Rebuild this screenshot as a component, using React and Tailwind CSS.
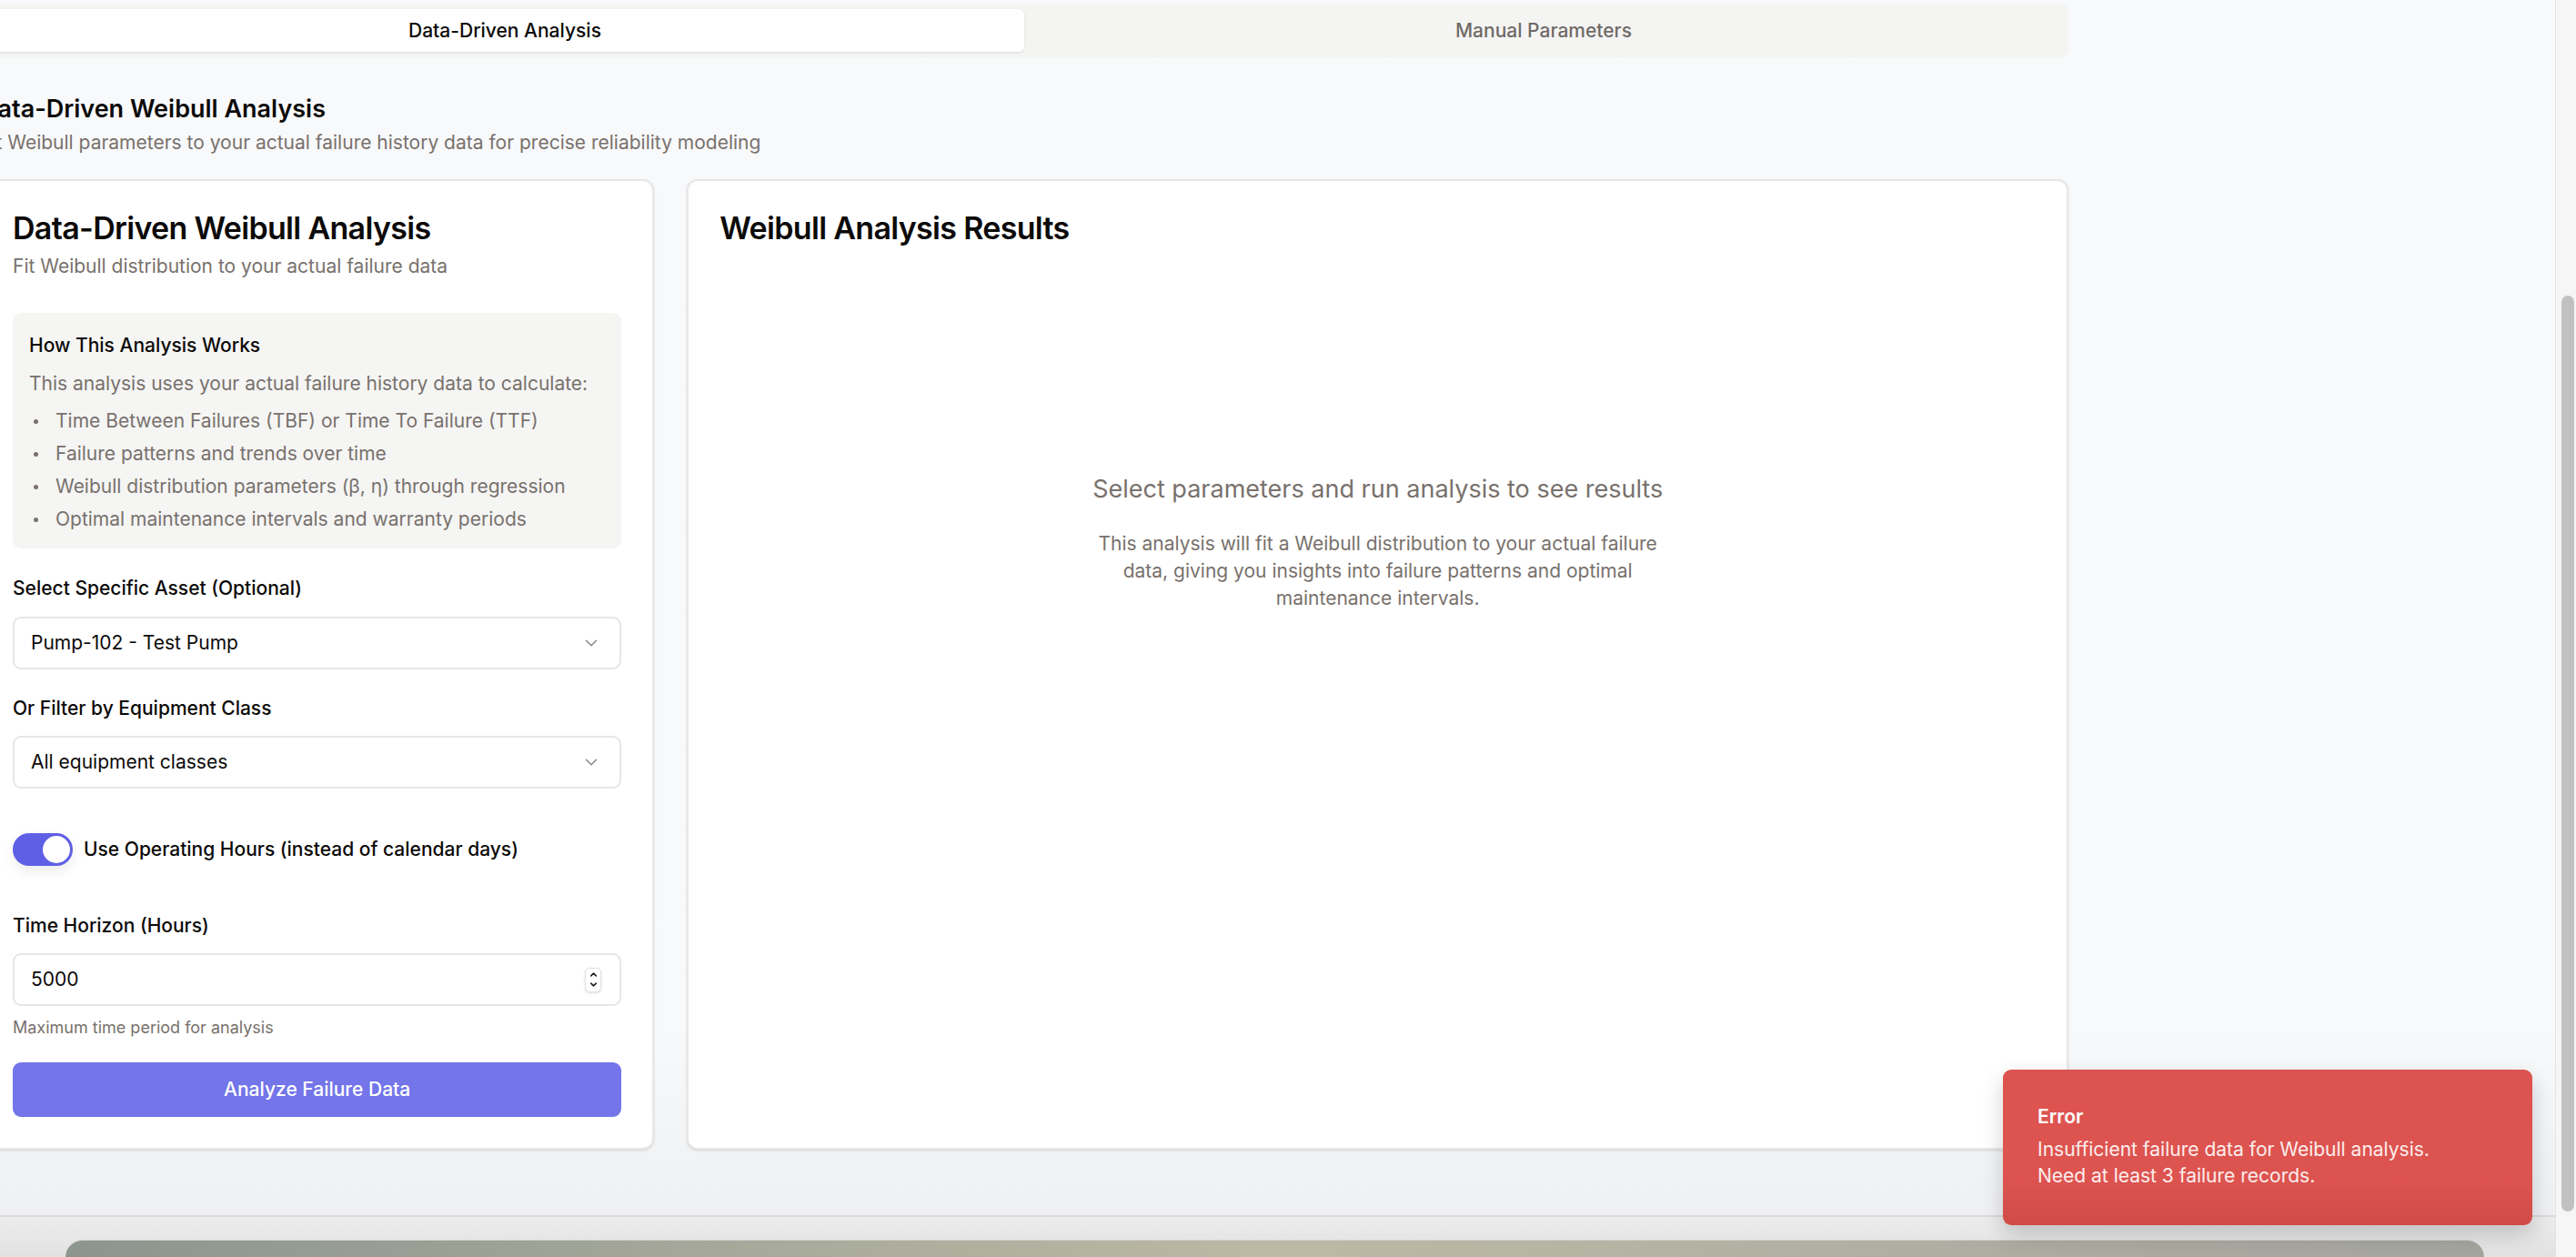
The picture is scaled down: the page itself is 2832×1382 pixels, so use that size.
import { ChevronDown, ChevronUp } from 'lucide-react';

const bullets = [
  'Time Between Failures (TBF) or Time To Failure (TTF)',
  'Failure patterns and trends over time',
  'Weibull distribution parameters (β, η) through regression',
  'Optimal maintenance intervals and warranty periods',
];

function SelectBox({ value }) {
  return (
    <div className="h-[58px] rounded-[9px] border-2 border-[#e7e6e5] bg-white flex items-center justify-between pl-[18px] pr-[20px]">
      <span className="text-[21px] text-[#0c0a09]">{value}</span>
      <ChevronDown className="w-[22px] h-[22px] text-[#8a8683]" strokeWidth={1.6} />
    </div>
  );
}

function FieldLabel({ children }) {
  return <div className="text-[21px] leading-[30px] font-medium text-[#0c0a09]">{children}</div>;
}

function ConfigCard() {
  return (
    <div className="rounded-[12px] border-2 border-[#e8e7e6] bg-white shadow-sm flex flex-col">
      {/* Header */}
      <div className="px-[34px] pt-[34px] pb-[36px]">
        <h3 className="text-[34px] leading-[36px] font-semibold tracking-[-0.02em] text-[#0c0a09]">
          Data-Driven Weibull Analysis
        </h3>
        <p className="mt-[9px] text-[21px] leading-[30px] text-[#78716c]">
          Fit Weibull distribution to your actual failure data
        </p>
      </div>

      <div className="px-[34px] pb-[34px] flex flex-col">
        {/* How it works */}
        <div className="rounded-[9px] bg-[#f5f5f4] px-[18px] pt-[21px] pb-[17px]">
          <div className="text-[21px] leading-[30px] font-medium text-[#0c0a09]">How This Analysis Works</div>
          <p className="mt-[12px] text-[21px] leading-[30px] text-[#78716c]">
            This analysis uses your actual failure history data to calculate:
          </p>
          <ul className="mt-[11px] flex flex-col gap-[6px]">
            {bullets.map((b) => (
              <li key={b} className="flex items-center text-[21px] leading-[30px] text-[#78716c]">
                <span className="w-[29px] flex-shrink-0 flex">
                  <span className="ml-[5px] w-[5px] h-[5px] rounded-full bg-[#78716c]" />
                </span>
                {b}
              </li>
            ))}
          </ul>
        </div>

        <div className="mt-[29px]">
          <FieldLabel>Select Specific Asset (Optional)</FieldLabel>
          <div className="mt-[16px]">
            <SelectBox value="Pump-102 - Test Pump" />
          </div>
        </div>

        <div className="mt-[28px]">
          <FieldLabel>Or Filter by Equipment Class</FieldLabel>
          <div className="mt-[15px]">
            <SelectBox value="All equipment classes" />
          </div>
        </div>

        {/* Switch */}
        <div className="mt-[49px] flex items-center gap-[12px]">
          <div className="w-[66px] h-[36px] rounded-full bg-[#5f5fe6] p-[3px] flex justify-end shadow-[0_6px_14px_rgba(0,0,0,0.08)]">
            <div className="w-[30px] h-[30px] rounded-full bg-white" />
          </div>
          <span className="text-[21px] font-medium text-[#0c0a09]">Use Operating Hours (instead of calendar days)</span>
        </div>

        <div className="mt-[51px]">
          <FieldLabel>Time Horizon (Hours)</FieldLabel>
          <div className="mt-[15px] h-[58px] rounded-[9px] border-2 border-[#e7e6e5] bg-white flex items-center justify-between pl-[18px] pr-[20px]">
            <span className="text-[21px] text-[#0c0a09]">5000</span>
            <div className="w-[18px] h-[27px] rounded-[5px] border border-[#e2e2e2] bg-white shadow-sm flex flex-col items-center justify-center">
              <ChevronUp className="w-[11px] h-[11px] text-[#222]" strokeWidth={3.5} />
              <ChevronDown className="w-[11px] h-[11px] text-[#222]" strokeWidth={3.5} />
            </div>
          </div>
          <p className="mt-[12px] text-[18px] leading-[24px] text-[#78716c]">Maximum time period for analysis</p>
        </div>

        <button className="mt-[26px] h-[60px] rounded-[9px] bg-[#7375e9] text-white text-[21px] font-medium">
          Analyze Failure Data
        </button>
      </div>
    </div>
  );
}

function ResultsCard() {
  return (
    <div className="col-span-2 rounded-[12px] border-2 border-[#e8e7e6] bg-white shadow-sm flex flex-col">
      <div className="px-[34px] pt-[34px] pb-[36px]">
        <h3 className="text-[34px] leading-[36px] font-semibold tracking-[-0.02em] text-[#0c0a09]">
          Weibull Analysis Results
        </h3>
      </div>
      <div className="pt-[213px] text-center">
        <p className="text-[27px] leading-[40px] text-[#78716c]">Select parameters and run analysis to see results</p>
        <p className="mt-[25px] max-w-[640px] mx-auto text-[21px] leading-[30px] text-[#78716c]">
          This analysis will fit a Weibull distribution to your actual failure data, giving you insights into failure
          patterns and optimal maintenance intervals.
        </p>
      </div>
    </div>
  );
}

export default function App() {
  return (
    <div className="relative w-[2832px] h-[1382px] overflow-hidden flex bg-[#f8f9fb] font-['Inter','Liberation_Sans',sans-serif] antialiased">
      <div className="w-[2809px] flex flex-col">
        <div className="h-[1336px] overflow-hidden bg-gradient-to-b from-[#f8f9fb] from-85% to-[#eff0f2]">
          <div className="ml-[-22px] w-[2296px] pt-[4px]">
            {/* Tabs */}
            <div className="h-[59px] rounded-[9px] bg-[#f4f4f3] p-[6px] grid grid-cols-2">
              <div className="rounded-[6px] bg-white shadow-[0_1px_3px_rgba(0,0,0,0.1)] flex items-center justify-center text-[21px] font-medium text-[#0c0a09]">
                Data-Driven Analysis
              </div>
              <div className="flex items-center justify-center text-[21px] font-medium text-[#6f6a66]">
                Manual Parameters
              </div>
            </div>

            {/* Heading */}
            <h2 className="mt-[37px] text-[27px] leading-[40px] font-semibold text-[#0c0a09]">Data-Driven Weibull Analysis</h2>
            <p className="mt-[2px] text-[21px] leading-[30px] text-[#78716c]">
              Fit Weibull parameters to your actual failure history data for precise reliability modeling
            </p>

            <div className="mt-[25px] grid grid-cols-3 gap-[36px]">
              <ConfigCard />
              <ResultsCard />
            </div>
          </div>
        </div>
        <div className="h-[2px] bg-[#dcd9d9]" />
        <div className="flex-1 bg-gradient-to-b from-[#ececec] to-[#e2e2e2] flex pt-[25px] pl-[72px] pr-[78px]">
          <div className="flex-1 rounded-t-[22px] bg-gradient-to-r from-[#8c958e] via-[#bcb9a4] to-[#a5a5a0] border-t border-[#d0d0d0]" />
        </div>
      </div>
      <div className="w-px bg-[#e3e3e3]" />
      <div className="w-[22px] bg-[#f6f6f6] flex flex-col pt-[325px] pl-[6px] pb-[50px]">
        <div className="w-[14px] h-[1007px] rounded-full bg-[#c1c1c1]" />
      </div>

      {/* Toast */}
      <div className="absolute left-[2202px] top-[1176px] w-[582px] h-[171px] rounded-[9px] bg-gradient-to-b from-[#dd534f] from-70% to-[#d04c47] shadow-[0_10px_24px_rgba(0,0,0,0.18)] px-[38px] pt-[37px] text-white">
        <div className="text-[21px] leading-[30px] font-semibold">Error</div>
        <div className="mt-[6px] text-[21px] leading-[29px] text-white/90">
          <div>Insufficient failure data for Weibull analysis.</div>
          <div>Need at least 3 failure records.</div>
        </div>
      </div>
    </div>
  );
}
